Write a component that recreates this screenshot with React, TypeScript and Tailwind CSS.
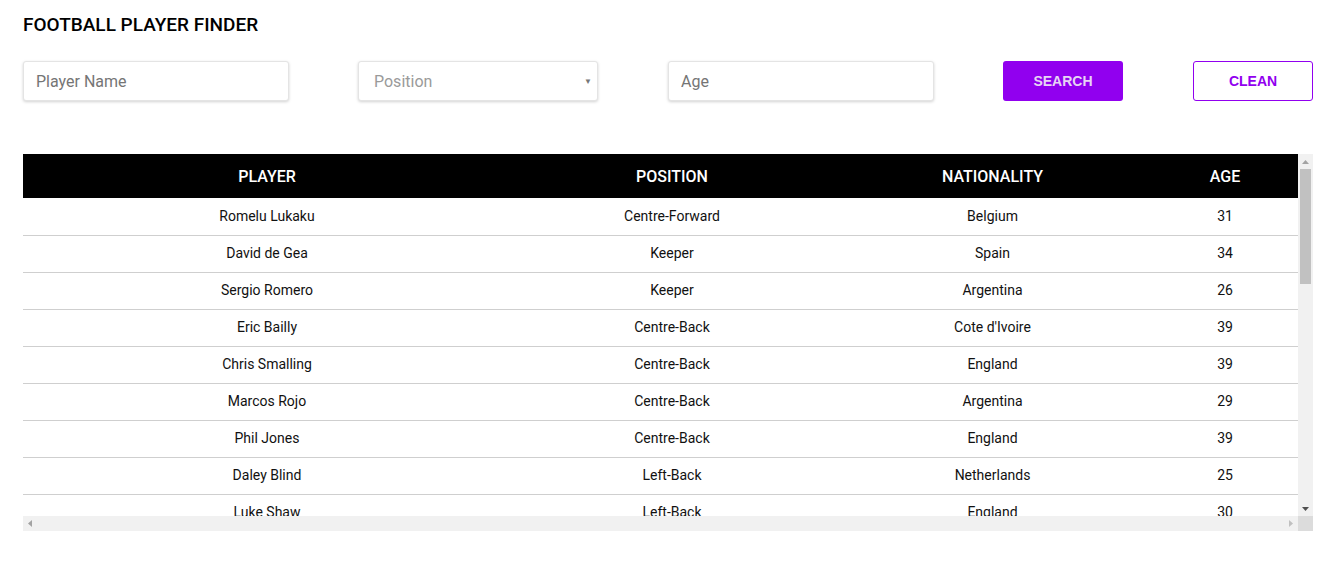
import React from "react";

const players: [string, string, string, number][] = [
  ["Romelu Lukaku", "Centre-Forward", "Belgium", 31],
  ["David de Gea", "Keeper", "Spain", 34],
  ["Sergio Romero", "Keeper", "Argentina", 26],
  ["Eric Bailly", "Centre-Back", "Cote d'Ivoire", 39],
  ["Chris Smalling", "Centre-Back", "England", 39],
  ["Marcos Rojo", "Centre-Back", "Argentina", 29],
  ["Phil Jones", "Centre-Back", "England", 39],
  ["Daley Blind", "Left-Back", "Netherlands", 25],
  ["Luke Shaw", "Left-Back", "England", 30],
];

export default function App() {
  const inputCls =
    "h-[40px] bg-white border border-[#e4e4e4] rounded-[3px] shadow-[0_1px_3px_rgba(0,0,0,0.18)] px-3 text-[16px] text-[#333] placeholder:text-[#757575] outline-none";
  return (
    <div className="w-[1342px] h-[586px] bg-white" style={{ fontFamily: "Roboto, 'Liberation Sans', sans-serif" }}>
      <div className="pl-[23px]">
        <h1 className="pt-[14px] text-[19px] leading-[22px] font-medium text-black">FOOTBALL PLAYER FINDER</h1>
        <div className="mt-[25px] flex items-center">
          <input className={`${inputCls} w-[266px]`} placeholder="Player Name" />
          <div className="relative ml-[69px] w-[240px] h-[40px] bg-white border border-[#e4e4e4] rounded-[3px] shadow-[0_1px_3px_rgba(0,0,0,0.18)] flex items-center px-[15px] pt-[1px]">
            <span className="text-[16px] text-[#9a9a9a]">Position</span>
            <span className="absolute right-[5px] top-[14px] text-[8px] text-[#777]">▼</span>
          </div>
          <input className={`${inputCls} ml-[70px] w-[266px]`} placeholder="Age" />
          <button className="ml-[69px] w-[120px] h-[40px] rounded-[3px] bg-[#9100ef] text-[#e6d4f4] text-[14px] font-bold" style={{ fontFamily: "'Liberation Sans', Arial, sans-serif" }}>
            SEARCH
          </button>
          <button className="ml-[70px] w-[120px] h-[40px] rounded-[3px] bg-white border border-[#9100ef] text-[#9100ef] text-[14px] font-bold" style={{ fontFamily: "'Liberation Sans', Arial, sans-serif" }}>
            CLEAN
          </button>
        </div>
        <div className="mt-[53px] w-[1290px] h-[377px] flex flex-col">
          <div className="flex h-[362px]">
            <div className="w-[1275px] h-[362px] overflow-hidden">
              <table className="w-[1275px] border-collapse text-center">
                <thead>
                  <tr className="bg-black text-white h-[44px] text-[16px]">
                    <th className="w-[488px] font-medium pt-[2px]">PLAYER</th>
                    <th className="w-[322px] font-medium pt-[2px]">POSITION</th>
                    <th className="w-[319px] font-medium pt-[2px]">NATIONALITY</th>
                    <th className="font-medium pt-[2px]">AGE</th>
                  </tr>
                </thead>
                <tbody className="text-[14px] text-[#111]">
                  {players.map((p, i) => (
                    <tr key={i} className="h-[37px] border-b border-[#cfcfcf]">
                      <td>{p[0]}</td>
                      <td>{p[1]}</td>
                      <td>{p[2]}</td>
                      <td>{p[3]}</td>
                    </tr>
                  ))}
                </tbody>
              </table>
            </div>
            <div className="w-[15px] h-[362px] bg-[#f1f1f1] flex flex-col items-center">
              <div className="h-[15px] w-full flex items-center justify-center">
                <svg width="7" height="4" viewBox="0 0 7 4"><path d="M3.5 0L7 4H0z" fill="#a3a3a3" /></svg>
              </div>
              <div className="w-[11px] h-[115px] bg-[#c1c1c1]" />
              <div className="flex-1" />
              <div className="h-[15px] w-full flex items-center justify-center">
                <svg width="7" height="4" viewBox="0 0 7 4"><path d="M0 0H7L3.5 4z" fill="#505050" /></svg>
              </div>
            </div>
          </div>
          <div className="flex h-[15px]">
            <div className="w-[1275px] h-[15px] bg-[#f1f1f1] flex items-center justify-between px-[5px]">
              <svg width="4" height="7" viewBox="0 0 4 7"><path d="M0 3.5L4 0V7z" fill="#a3a3a3" /></svg>
              <svg width="4" height="7" viewBox="0 0 4 7"><path d="M4 3.5L0 0V7z" fill="#c0c0c0" /></svg>
            </div>
            <div className="w-[15px] h-[15px] bg-[#dcdcdc]" />
          </div>
        </div>
      </div>
    </div>
  );
}
